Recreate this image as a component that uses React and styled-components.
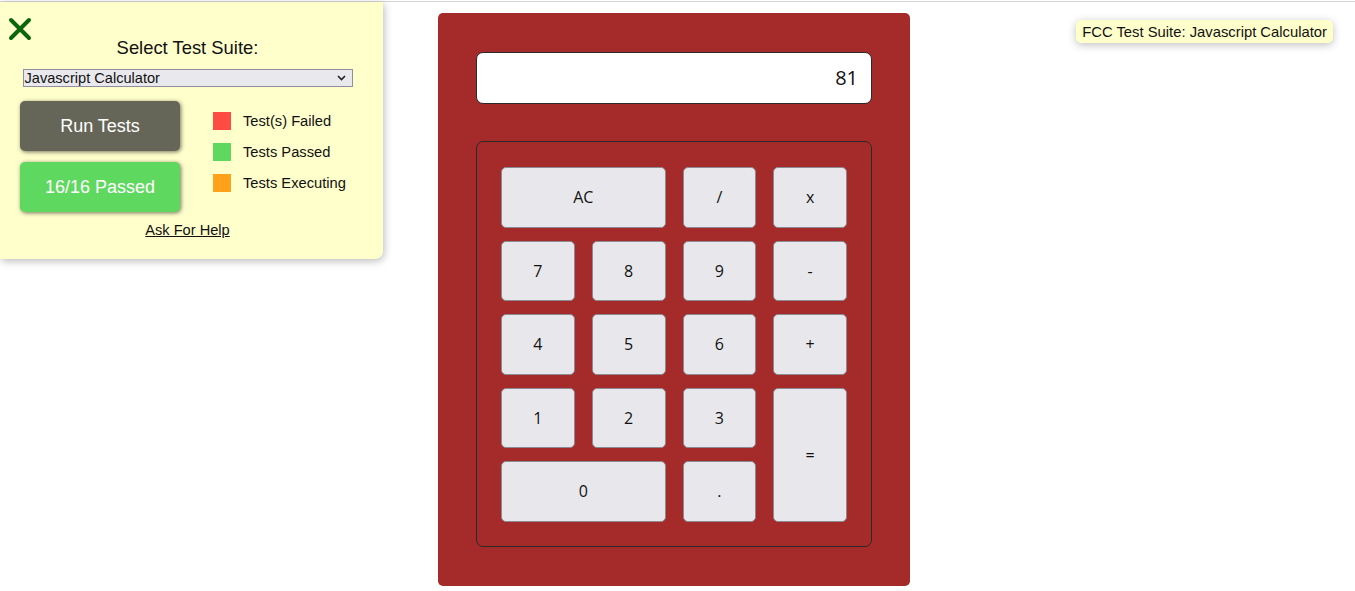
import React from "react";
import styled, { createGlobalStyle } from "styled-components";

const Global = createGlobalStyle`
  html, body { margin: 0; padding: 0; background: #fff; }
  body { font-family: "Liberation Sans", Arial, sans-serif; }
  * { box-sizing: border-box; }
`;

const Page = styled.div`
  position: relative;
  width: 1355px;
  height: 591px;
  overflow: hidden;
`;

const TopRule = styled.div`
  height: 1px;
  margin-top: 1px;
  background: #d6d6d6;
`;

const Stage = styled.main`
  display: flex;
  justify-content: center;
  padding: 11px 7px 0 0;
`;

const Calculator = styled.div`
  width: 472px;
  height: 573px;
  background: #a52a2a;
  border-radius: 5px;
  padding: 39px 38px;
  display: flex;
  flex-direction: column;
  gap: 37px;
  font-family: "Open Sans", "DejaVu Sans", sans-serif;
`;

const Display = styled.div`
  height: 52px;
  background: #fff;
  border: 1px solid #2a2a2a;
  border-radius: 7px;
  display: flex;
  align-items: center;
  justify-content: flex-end;
  padding: 0 13px 1px 0;
  font-size: 20px;
  color: #111;
`;

const Keypad = styled.div`
  height: 406px;
  border: 1px solid #2a2a2a;
  border-radius: 7px;
  padding: 25px 24px 0 24px;
  display: grid;
  grid-template-columns: repeat(4, 1fr);
  grid-template-rows: repeat(5, 60.5px);
  column-gap: 17px;
  row-gap: 13px;
`;

const Key = styled.button`
  grid-column: span ${(p) => p.$cols || 1};
  grid-row: span ${(p) => p.$rows || 1};
  background: #e8e8ec;
  border: 1px solid #8a8a92;
  border-radius: 5px;
  font-family: "Open Sans", "DejaVu Sans", sans-serif;
  font-size: 16px;
  color: #111;
  padding: 0;
  cursor: pointer;
`;

const Panel = styled.aside`
  position: absolute;
  top: 2px;
  left: 0;
  width: 383px;
  height: 257px;
  background: #ffffcc;
  border-bottom-right-radius: 8px;
  box-shadow: 1px 2px 8px rgba(0, 0, 0, 0.28);
  padding: 35px 8px 0 0;
  display: flex;
  flex-direction: column;
  align-items: center;
  font-family: "Liberation Sans", Arial, sans-serif;
`;

const Close = styled.svg`
  position: absolute;
  top: 15px;
  left: 8px;
`;

const Title = styled.div`
  font-size: 18.4px;
  line-height: 22px;
  color: #111;
`;

const SelectBox = styled.div`
  margin-top: 10px;
  width: 330px;
  height: 18px;
  background: #e9e9ed;
  border: 1px solid #8f8f9d;
  display: flex;
  align-items: center;
  justify-content: space-between;
  padding: 0 6px 0 1px;
  font-size: 14.6px;
  color: #111;
`;

const Row = styled.div`
  align-self: stretch;
  margin-top: 14px;
  padding-left: 20px;
  display: flex;
  gap: 33px;
`;

const ButtonCol = styled.div`
  display: flex;
  flex-direction: column;
  gap: 11px;
`;

const ActionButton = styled.button`
  width: 160px;
  height: 50px;
  border: none;
  border-radius: 5px;
  background: ${(p) => p.$bg};
  color: #fff;
  font-family: "Liberation Sans", Arial, sans-serif;
  font-size: 18px;
  box-shadow: 1px 1px 4px rgba(0, 0, 0, 0.55);
  padding: 0;
`;

const Legend = styled.ul`
  list-style: none;
  margin: 11px 0 0;
  padding: 0;
  display: flex;
  flex-direction: column;
  gap: 13px;
`;

const LegendItem = styled.li`
  display: flex;
  align-items: center;
  gap: 12px;
  font-size: 14.7px;
  color: #111;
  height: 18px;
`;

const Swatch = styled.span`
  width: 18px;
  height: 18px;
  background: ${(p) => p.$color};
`;

const HelpLink = styled.a`
  margin-top: 10px;
  font-size: 14.6px;
  color: #111;
  text-decoration: underline;
`;

const Tooltip = styled.div`
  position: absolute;
  top: 20px;
  right: 22px;
  height: 23px;
  padding: 0 6px;
  display: flex;
  align-items: center;
  background: #ffffcc;
  border-radius: 5px;
  box-shadow: 0 2px 8px rgba(0, 0, 0, 0.25);
  font-family: "Liberation Sans", Arial, sans-serif;
  font-size: 14.8px;
  color: #111;
`;

const keys = [
  { l: "AC", c: 2 },
  { l: "/" },
  { l: "x" },
  { l: "7" },
  { l: "8" },
  { l: "9" },
  { l: "-" },
  { l: "4" },
  { l: "5" },
  { l: "6" },
  { l: "+" },
  { l: "1" },
  { l: "2" },
  { l: "3" },
  { l: "=", r: 2 },
  { l: "0", c: 2 },
  { l: "." },
];

export default function App() {
  return (
    <Page>
      <Global />
      <TopRule />
      <Stage>
        <Calculator>
          <Display>81</Display>
          <Keypad>
            {keys.map((k) => (
              <Key key={k.l} $cols={k.c} $rows={k.r}>
                {k.l}
              </Key>
            ))}
          </Keypad>
        </Calculator>
      </Stage>

      <Panel>
        <Close width="24" height="24" viewBox="0 0 24 24">
          <path d="M3 3 L21 21 M21 3 L3 21" stroke="#0b650b" strokeWidth="4" strokeLinecap="round" />
        </Close>
        <Title>Select Test Suite:</Title>
        <SelectBox>
          <span>Javascript Calculator</span>
          <svg width="9" height="6" viewBox="0 0 9 6">
            <path d="M1 1 L4.5 4.5 L8 1" stroke="#222" strokeWidth="1.6" fill="none" />
          </svg>
        </SelectBox>
        <Row>
          <ButtonCol>
            <ActionButton $bg="#666658">Run Tests</ActionButton>
            <ActionButton $bg="#5fd85f">16/16 Passed</ActionButton>
          </ButtonCol>
          <Legend>
            <LegendItem>
              <Swatch $color="#ff4c42" />
              Test(s) Failed
            </LegendItem>
            <LegendItem>
              <Swatch $color="#5fd85f" />
              Tests Passed
            </LegendItem>
            <LegendItem>
              <Swatch $color="#ffa11a" />
              Tests Executing
            </LegendItem>
          </Legend>
        </Row>
        <HelpLink href="#">Ask For Help</HelpLink>
      </Panel>

      <Tooltip>FCC Test Suite: Javascript Calculator</Tooltip>
    </Page>
  );
}
